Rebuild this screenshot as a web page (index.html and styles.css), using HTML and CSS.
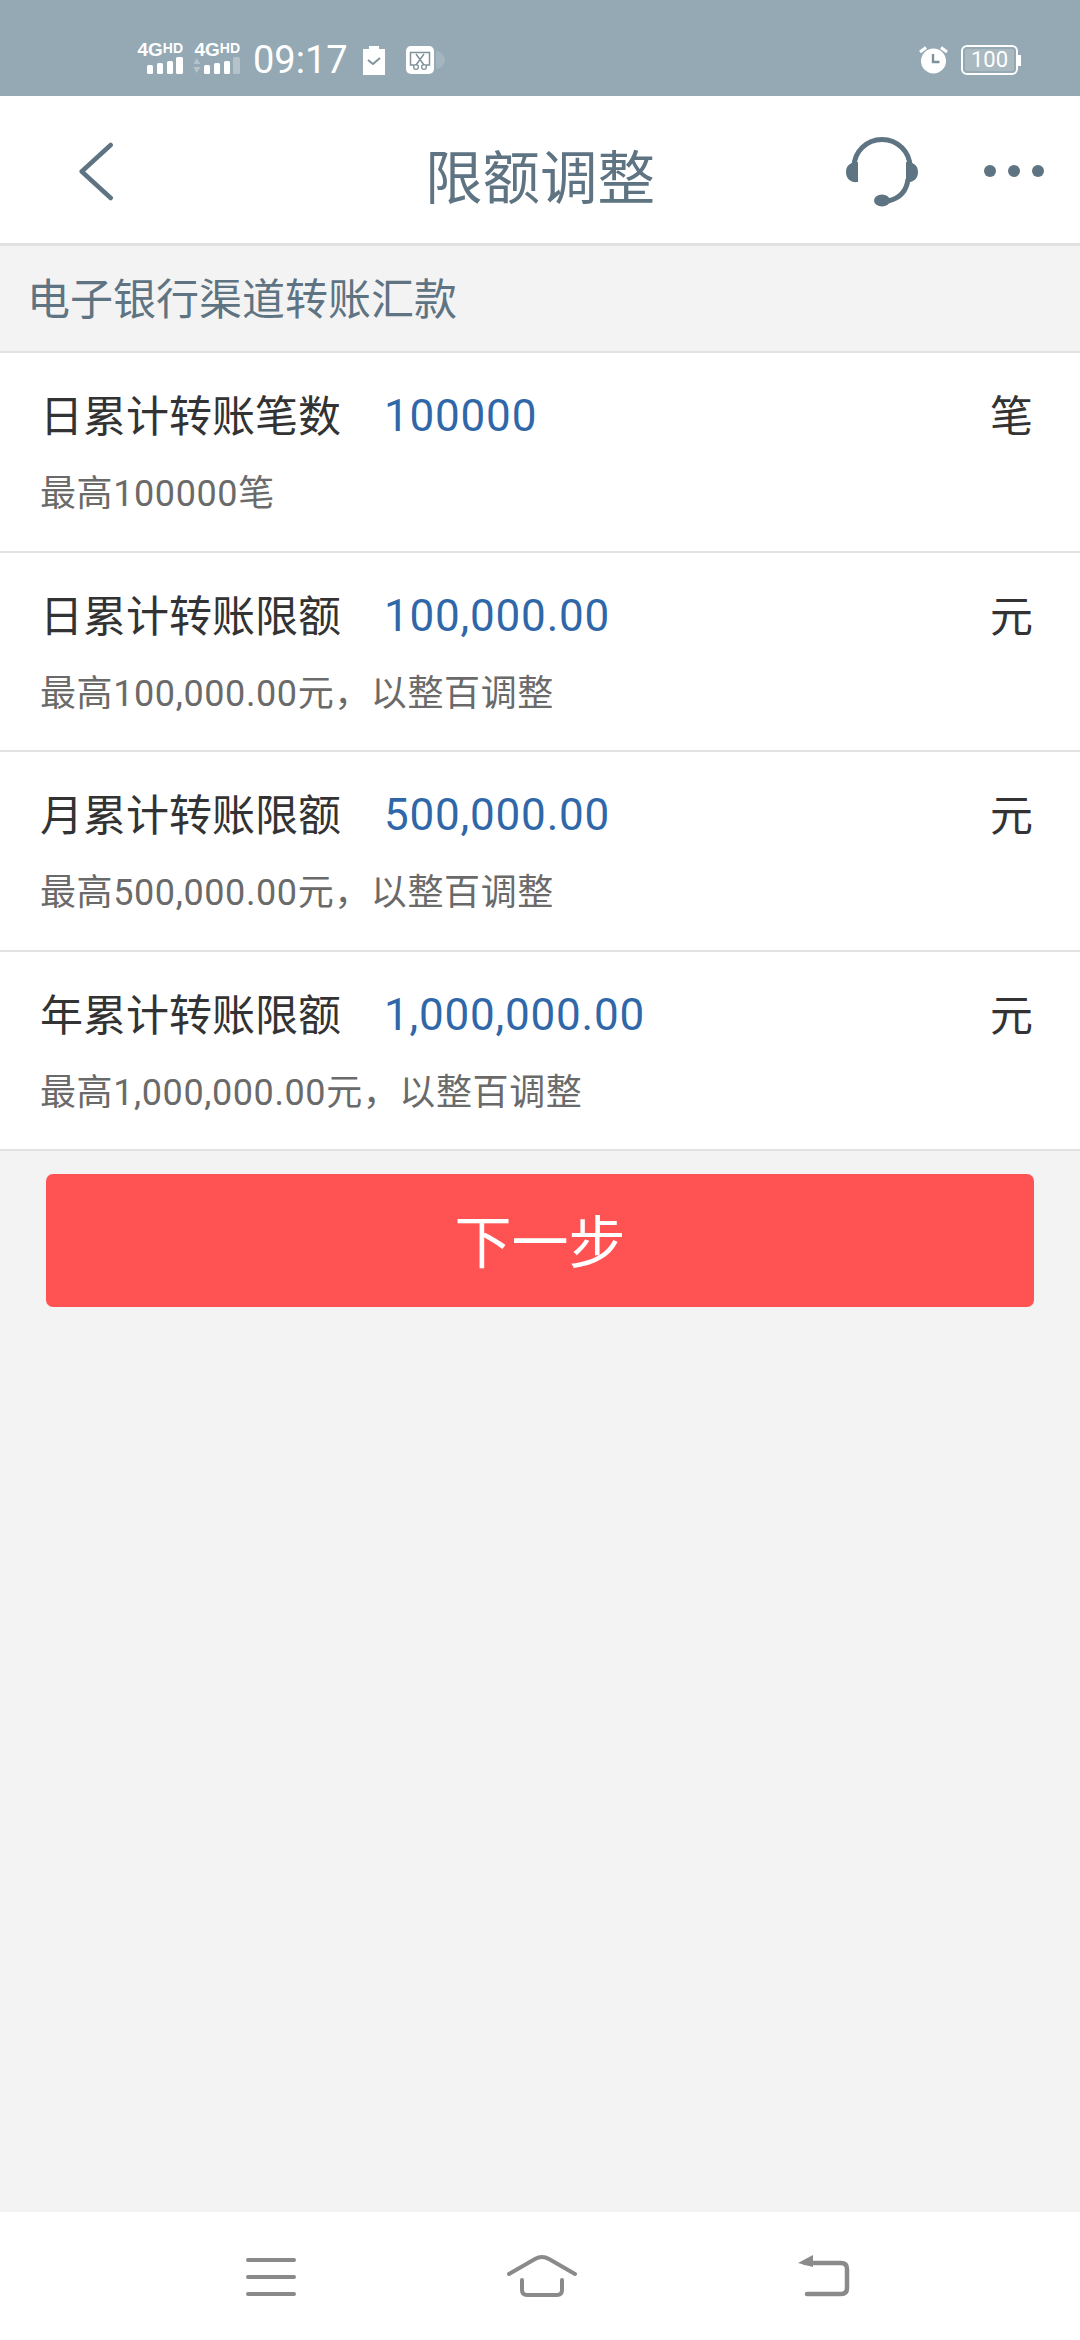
FILE: index.html
```html
<!DOCTYPE html>
<html lang="zh">
<head>
<meta charset="utf-8">
<title>限额调整</title>
<link rel="stylesheet" href="styles.css">
</head>
<body>
<div class="screen">
  <header class="status">
    <div class="status-left">
      <div class="sig">
        <span class="net">4G<sup>HD</sup></span>
        <svg class="bars" width="36" height="17" viewBox="0 0 36 17"><g fill="#fff"><rect x="0" y="8" width="6" height="9" rx="1.500"/><rect x="10" y="6" width="6" height="11" rx="1.500"/><rect x="20" y="4" width="6" height="13" rx="1.500"/><rect x="29" y="0" width="7" height="17" rx="1.500"/></g></svg>
      </div>
      <div class="sig">
        <span class="net">4G<sup>HD</sup></span>
        <svg class="bars" width="47" height="17" viewBox="0 0 47 17"><g fill="#fff"><path d="M3.500 1l4 6h-7z" opacity=".3"/><path d="M3.500 16l4-6h-7z" opacity=".3"/><rect x="11" y="8" width="6" height="9" rx="1.500"/><rect x="21" y="6" width="6" height="11" rx="1.500"/><rect x="31" y="4" width="6" height="13" rx="1.500"/><rect x="40" y="0" width="7" height="17" rx="1.500" opacity=".3"/></g></svg>
      </div>
      <span class="time">09:17</span>
      <svg class="st-icon clip" width="22" height="29" viewBox="0 0 22 29"><path fill="#fff" d="M6 0h10v3h6v26H0V3h6z"/><path d="M5 14l5 4 7-6" fill="none" stroke="#7f929c" stroke-width="2"/></svg>
      <svg class="st-icon shot" width="40" height="28" viewBox="0 0 40 28"><rect width="28" height="28" rx="5" fill="#fff"/><path d="M30 5a9 9 0 0 1 0 18z" fill="#fff" opacity=".14"/><path d="M8 19H4.500V6.500h19V19H20M10 8l8 11M18 8l-8 11" fill="none" stroke="#7f929c" stroke-width="1.500"/><circle cx="10" cy="21" r="2.400" fill="none" stroke="#7f929c" stroke-width="1.300"/><circle cx="18" cy="21" r="2.400" fill="none" stroke="#7f929c" stroke-width="1.300"/></svg>
    </div>
    <div class="status-right">
      <svg width="29" height="28" viewBox="0 0 29 28"><circle cx="14.500" cy="15" r="12.500" fill="#fff"/><path d="M1 6l6-4.500M28 6l-6-4.500" stroke="#fff" stroke-width="3"/><path d="M14 8v8h6.500" fill="none" stroke="#7f929c" stroke-width="2.400"/></svg>
      <div class="battery"><div class="battery-body"><span>100</span></div><i class="battery-tip"></i></div>
    </div>
  </header>

  <nav class="nav">
    <svg class="back" width="36" height="59" viewBox="0 0 36 59"><path d="M32.700 3L3.700 29.500l29 26.500" fill="none" stroke="#5f7482" stroke-width="4.500" stroke-linecap="round" stroke-linejoin="round"/></svg>
    <h1 class="title">限额调整</h1>
    <div class="nav-actions">
      <svg class="headset" width="72" height="70" viewBox="0 0 72 70"><path d="M8 30a28 27.500 0 0 1 56 0v12" fill="none" stroke="#5f7482" stroke-width="5"/><path d="M62 42Q60 60 42 64" fill="none" stroke="#5f7482" stroke-width="5"/><path d="M12 25v20c-7 1-12-3-12-10s5-10 12-10zM60 25v20c7 1 12-3 12-10s-5-10-12-10z" fill="#5f7482"/><ellipse cx="36" cy="63.500" rx="8" ry="6" fill="#5f7482"/></svg>
      <div class="more"><i></i><i></i><i></i></div>
    </div>
  </nav>

  <section class="section-head">电子银行渠道转账汇款</section>

  <div class="list">
    <div class="row">
      <div class="row-main"><span class="label">日累计转账笔数</span><span class="value">100000</span><span class="unit">笔</span></div>
      <div class="hint">最高100000笔</div>
    </div>
    <div class="row">
      <div class="row-main"><span class="label">日累计转账限额</span><span class="value">100,000.00</span><span class="unit">元</span></div>
      <div class="hint">最高100,000.00元，以整百调整</div>
    </div>
    <div class="row">
      <div class="row-main"><span class="label">月累计转账限额</span><span class="value">500,000.00</span><span class="unit">元</span></div>
      <div class="hint">最高500,000.00元，以整百调整</div>
    </div>
    <div class="row">
      <div class="row-main"><span class="label">年累计转账限额</span><span class="value">1,000,000.00</span><span class="unit">元</span></div>
      <div class="hint">最高1,000,000.00元，以整百调整</div>
    </div>
  </div>

  <div class="action"><button class="next" type="button">下一步</button></div>

  <footer class="sysnav">
    <svg class="sn-menu" width="50" height="46" viewBox="0 0 50 46"><path d="M2 8h46M2 25h46M2 42h46" stroke="#8a8a8a" stroke-width="4" stroke-linecap="round"/></svg>
    <svg class="sn-home" width="72" height="48" viewBox="0 0 72 48"><path d="M3 22L29 7q7-4 14 0L69 22" fill="none" stroke="#8a8a8a" stroke-width="4" stroke-linecap="round"/><path d="M16 28v10q0 5 5 5h30q5 0 5-5V28" fill="none" stroke="#8a8a8a" stroke-width="4" stroke-linecap="round"/></svg>
    <svg class="sn-back" width="54" height="46" viewBox="0 0 54 46"><path d="M1 11L16 3v12z" fill="#8a8a8a"/><path d="M8 11h36q6 0 6 6v19q0 6-6 6H10" fill="none" stroke="#8a8a8a" stroke-width="4.500" stroke-linecap="round"/></svg>
  </footer>
</div>
</body>
</html>
```
FILE: styles.css
```css
* { box-sizing: border-box; }
html, body { margin: 0; padding: 0; }
body { font-family: "Noto Sans CJK SC", "Noto Sans", sans-serif; background: #f3f3f4; }
.screen { width: 1080px; height: 2340px; display: flex; flex-direction: column; background: #f3f3f4; }

.status { height: 96px; flex: none; background: #94a9b4; display: flex; justify-content: space-between; align-items: center; padding: 24px 59px 0 136px; color: #fff; }
.status-left { display: flex; align-items: center; }
.status-right { display: flex; align-items: center; gap: 13px; }
.sig { display: flex; flex-direction: column; align-items: flex-end; width: 47px; margin-right: 10px; margin-bottom: 3px; font-family: "Liberation Sans", sans-serif; }
.net { font-size: 19px; font-weight: 700; line-height: 14px; height: 14px; white-space: nowrap; }
.net sup { font-size: 14px; line-height: 0; vertical-align: 3px; }
.bars { display: block; }
.time { font-family: "Roboto", sans-serif; font-size: 38px; line-height: 44px; margin-left: 3px; font-weight: 400; }
.st-icon { display: block; }
.clip { margin-left: 15px; }
.shot { margin-left: 21px; }
.battery { display: flex; align-items: center; }
.battery-body { width: 57px; height: 30px; border: 2.500px solid #fff; border-radius: 6px; padding: 2px; }
.battery-body span { display: block; height: 100%; background: #aab8c0; border-radius: 2px; font-family: "Roboto", sans-serif; font-size: 22px; line-height: 21px; text-align: center; }
.battery-tip { width: 3px; height: 11px; background: #fff; }

.nav { height: 150px; flex: none; background: #fff; border-bottom: 3px solid #e2e2e2; display: grid; grid-template-columns: 1fr auto 1fr; align-items: center; padding: 4px 36px 0; }
.back { display: block; margin-left: 42px; }
.title { margin: 0; font-size: 57.500px; font-weight: 400; color: #5f7482; line-height: 66px; padding-top: 4px; }
.nav-actions { display: flex; align-items: center; justify-content: flex-end; gap: 66px; }
.headset { display: block; }
.more { display: flex; gap: 12px; margin-bottom: 2px; }
.more i { width: 12px; height: 12px; border-radius: 50%; background: #5f7482; display: block; }

.section-head { height: 105px; flex: none; display: flex; align-items: center; padding: 0 0 6px 27px; font-size: 43px; color: #5f7482; }
.list { background: #fff; border-top: 2px solid #e2e2e2; flex: none; }
.row { height: 199.500px; border-bottom: 2px solid #e2e2e2; padding: 35px 47px 0 40px; }
.row-main { display: flex; align-items: center; height: 50px; }
.label { font-size: 43px; color: #333; width: 344px; flex: none; line-height: 50px; }
.value { font-family: "Roboto", "Noto Sans CJK SC", sans-serif; font-size: 44px; letter-spacing: .8px; color: #2f67a8; line-height: 50px; margin-top: 6px; }
.unit { margin-left: auto; font-size: 43px; color: #333; line-height: 50px; }
.hint { font-family: "Roboto", "Noto Sans CJK SC", sans-serif; font-size: 36px; letter-spacing: .6px; color: #6a6a6a; line-height: 44px; margin-top: 34px; }

.action { padding: 23px 46px 0; flex: none; }
.next { display: block; width: 100%; height: 133px; border: 0; border-radius: 7px; background: #ff5252; color: #fff; font-family: inherit; font-size: 57px; padding: 0 0 6px; }

.sysnav { margin-top: auto; height: 128px; flex: none; background: #fff; display: flex; align-items: flex-start; padding: 40px 0 0 246px; }
.sysnav svg { display: block; flex: none; }
.sn-home { margin-left: 210px; }
.sn-back { margin-left: 219px; }
```
